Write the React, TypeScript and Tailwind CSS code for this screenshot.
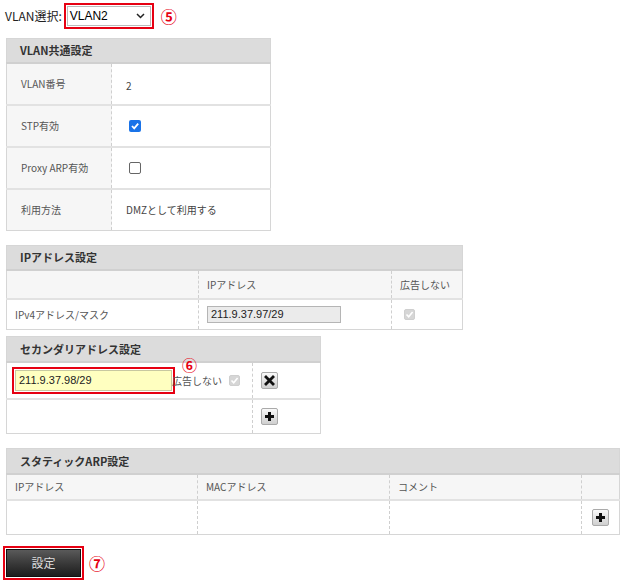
import React from 'react';

const font = { fontFamily: '"Noto Sans CJK JP", "Noto Sans", sans-serif' };
const latin = { fontFamily: '"Liberation Sans", Arial, sans-serif' };

function IconButton({ kind }: { kind: 'x' | 'plus' }) {
    return (
        <div className="w-[17px] h-[17px] rounded-[2px] border border-[#aaa] bg-gradient-to-b from-[#fafafa] to-[#cfcfcf] flex items-center justify-center">
            {kind === 'x' ? (
                <svg width="11" height="11" viewBox="0 0 11 11">
                    <path d="M2 2 L9 9 M9 2 L2 9" stroke="#111" strokeWidth="2.8" strokeLinecap="square" />
                </svg>
            ) : (
                <svg width="11" height="11" viewBox="0 0 11 11">
                    <path d="M5.5 1 V10 M1 5.5 H10" stroke="#111" strokeWidth="3" />
                </svg>
            )}
        </div>
    );
}

function DisabledCheck() {
    return (
        <div className="w-[11px] h-[11px] rounded-[2px] bg-[#d6d6d6] border border-[#cfcfcf] flex items-center justify-center">
            <svg width="9" height="9" viewBox="0 0 9 9">
                <path d="M1.5 4.5 L3.7 6.8 L7.6 2" stroke="#fff" strokeWidth="1.6" fill="none" />
            </svg>
        </div>
    );
}

const headCell = 'h-[24px] bg-[#dcdcdc] border-b-2 border-[#d0d0d0] px-[13px] text-left text-[11px] font-bold text-[#333]';
const labelCell = 'bg-[#f6f6f6] border-r border-dashed border-r-[#cfcfcf] px-[14px] text-[10px] text-[#555] align-middle';
const rowLine = 'border-b-2 border-[#e2e2e2]';
const dashR = 'border-r border-dashed border-r-[#cfcfcf]';
const small = 'text-[10px] text-[#555] whitespace-nowrap';

export default function App() {
    return (
        <div className="w-[630px] h-[581px] bg-white text-[#333] relative overflow-hidden" style={font}>
            {/* VLAN select */}
            <div className="flex items-center h-[30px] pt-[2px] pl-[5px]">
                <span className="text-[12px] text-[#222] mr-[2px]">VLAN選択:</span>
                <div className="border-2 border-[#e60012] p-[1px] w-[90px] h-[26px]">
                    <div className="h-full flex items-center justify-between border border-[#bbb] bg-white pl-[2px] pr-[5px]">
                        <span className="text-[12px] text-black" style={latin}>VLAN2</span>
                        <svg width="9" height="6" viewBox="0 0 9 6">
                            <path d="M1 1 L4.5 4.5 L8 1" stroke="#222" strokeWidth="1.5" fill="none" />
                        </svg>
                    </div>
                </div>
                <span className="ml-[7px] text-[16px] font-bold leading-none text-[#e60012]">⑤</span>
            </div>

            {/* VLAN common settings */}
            <table className="ml-[6px] mt-[8px] w-[265px] border-collapse border border-[#d6d6d6] table-fixed">
                <colgroup>
                    <col className="w-[105px]" />
                    <col />
                </colgroup>
                <thead>
                    <tr>
                        <th colSpan={2} className={headCell}>VLAN共通設定</th>
                    </tr>
                </thead>
                <tbody>
                    <tr className={`h-[42px] ${rowLine}`}>
                        <td className={labelCell}>VLAN番号</td>
                        <td className="pl-[14px] text-[10px] text-[#444] pt-[4px]">2</td>
                    </tr>
                    <tr className={`h-[42px] ${rowLine}`}>
                        <td className={labelCell}>STP有効</td>
                        <td className="pl-[17px]">
                            <div className="w-[12px] h-[12px] rounded-[2px] bg-[#1a73e8] flex items-center justify-center">
                                <svg width="10" height="10" viewBox="0 0 10 10">
                                    <path d="M2 5 L4.2 7.3 L8.2 2.6" stroke="#fff" strokeWidth="1.8" fill="none" />
                                </svg>
                            </div>
                        </td>
                    </tr>
                    <tr className={`h-[42px] ${rowLine}`}>
                        <td className={labelCell}>Proxy ARP有効</td>
                        <td className="pl-[17px]">
                            <div className="w-[12px] h-[12px] rounded-[2px] border border-[#666] bg-white" />
                        </td>
                    </tr>
                    <tr className="h-[42px]">
                        <td className={labelCell}>利用方法</td>
                        <td className="pl-[14px] text-[10px] text-[#444]">DMZとして利用する</td>
                    </tr>
                </tbody>
            </table>

            {/* IP address settings */}
            <table className="ml-[6px] mt-[14px] w-[457px] border-collapse border border-[#d6d6d6] table-fixed">
                <colgroup>
                    <col className="w-[192px]" />
                    <col className="w-[193px]" />
                    <col />
                </colgroup>
                <thead>
                    <tr>
                        <th colSpan={3} className={`${headCell} h-[23px]`}>IPアドレス設定</th>
                    </tr>
                </thead>
                <tbody>
                    <tr className={`h-[29px] bg-[#f6f6f6] ${rowLine}`}>
                        <td className={dashR} />
                        <td className={`${dashR} pl-[8px] ${small}`}>IPアドレス</td>
                        <td className={`pl-[8px] ${small}`}>広告しない</td>
                    </tr>
                    <tr className="h-[31px]">
                        <td className={`${dashR} pl-[8px] ${small}`}>IPv4アドレス/マスク</td>
                        <td className={`${dashR} pl-[8px]`}>
                            <div className="w-[134px] h-[17px] bg-[#ebebeb] border border-[#b5b5b5] flex items-center px-[3px] text-[11px] text-[#222]" style={latin}>
                                211.9.37.97/29
                            </div>
                        </td>
                        <td className="pl-[12px]">
                            <DisabledCheck />
                        </td>
                    </tr>
                </tbody>
            </table>

            {/* Secondary address settings */}
            <table className="ml-[6px] mt-[6px] w-[315px] border-collapse border border-[#d6d6d6] table-fixed">
                <colgroup>
                    <col className="w-[246px]" />
                    <col />
                </colgroup>
                <thead>
                    <tr>
                        <th colSpan={2} className={`${headCell} h-[25px]`}>セカンダリアドレス設定</th>
                    </tr>
                </thead>
                <tbody>
                    <tr className={`h-[37px] ${rowLine}`}>
                        <td className={`${dashR} pl-[5px]`}>
                            <div className="flex items-center relative">
                                <div className="border-2 border-[#e60012] p-[1px] w-[163px] h-[27px]">
                                    <div className="h-full bg-[#ffffc0] border border-[#c8c8a0] flex items-center px-[3px] text-[11px] text-[#222]" style={latin}>
                                        211.9.37.98/29
                                    </div>
                                </div>
                                <span className={`${small} -ml-[3px]`}>広告しない</span>
                                <div className="ml-[7px]">
                                    <DisabledCheck />
                                </div>
                                <span className="absolute left-[170px] -top-[10px] text-[15px] font-bold leading-none text-[#e60012]">⑥</span>
                            </div>
                        </td>
                        <td className="pl-[8px]">
                            <IconButton kind="x" />
                        </td>
                    </tr>
                    <tr className="h-[35px]">
                        <td className={dashR} />
                        <td className="pl-[8px]">
                            <IconButton kind="plus" />
                        </td>
                    </tr>
                </tbody>
            </table>

            {/* Static ARP settings */}
            <table className="ml-[6px] mt-[14px] w-[614px] border-collapse border border-[#d6d6d6] table-fixed">
                <colgroup>
                    <col className="w-[191px]" />
                    <col className="w-[192px]" />
                    <col className="w-[192px]" />
                    <col />
                </colgroup>
                <thead>
                    <tr>
                        <th colSpan={4} className={`${headCell} h-[25px]`}>スタティックARP設定</th>
                    </tr>
                </thead>
                <tbody>
                    <tr className={`h-[26px] bg-[#f6f6f6] ${rowLine}`}>
                        <td className={`${dashR} pl-[8px] ${small}`}>IPアドレス</td>
                        <td className={`${dashR} pl-[8px] ${small}`}>MACアドレス</td>
                        <td className={`${dashR} pl-[8px] ${small}`}>コメント</td>
                        <td />
                    </tr>
                    <tr className="h-[35px]">
                        <td className={dashR} />
                        <td className={dashR} />
                        <td className={dashR} />
                        <td className="pl-[10px] align-middle">
                            <IconButton kind="plus" />
                        </td>
                    </tr>
                </tbody>
            </table>

            {/* Submit */}
            <div className="flex items-center mt-[11px] ml-[3px]">
                <div className="border-2 border-[#e60012] p-[1px]">
                    <button className="w-[75px] h-[28px] bg-gradient-to-b from-[#5a5a5a] via-[#3a3a3a] to-[#1e1e1e] border border-[#111] text-[12px] text-[#ddd]">
                        設定
                    </button>
                </div>
                <span className="ml-[5px] text-[16px] font-bold leading-none text-[#e60012]">⑦</span>
            </div>
        </div>
    );
}
